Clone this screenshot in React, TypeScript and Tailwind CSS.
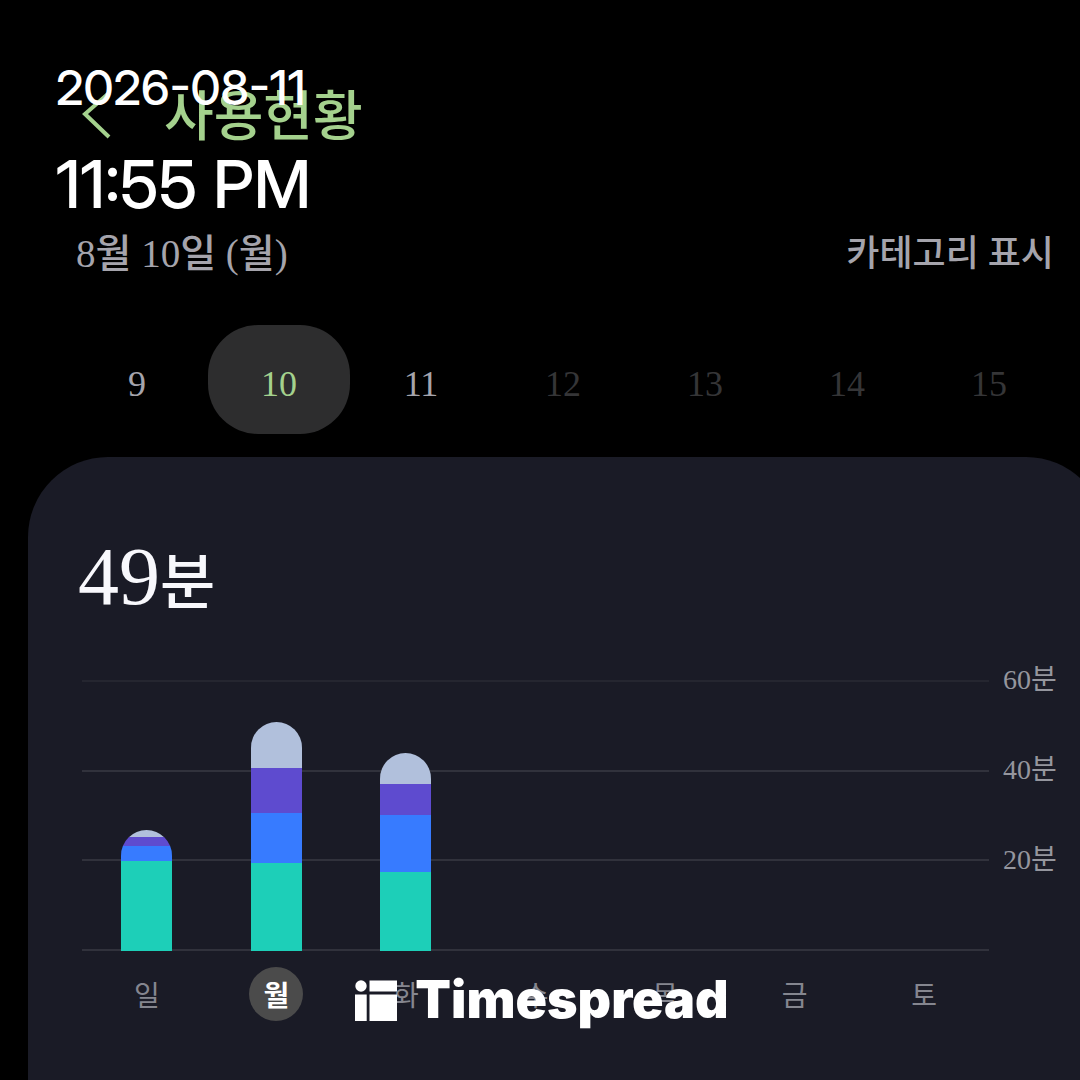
import clsx from "clsx";

const DATES = [
  { day: 9, state: "past" },
  { day: 10, state: "selected" },
  { day: 11, state: "past" },
  { day: 12, state: "future" },
  { day: 13, state: "future" },
  { day: 14, state: "future" },
  { day: 15, state: "future" },
];

const SEGMENT_COLORS = [
  "bg-[#b1c0dc]",
  "bg-[#5e4bcf]",
  "bg-[#377bff]",
  "bg-[#1dcfb8]",
];

// segment heights from top to bottom, 90px = 20 minutes
const WEEK = [
  { label: "일", segments: [7, 9, 15, 90] },
  { label: "월", segments: [46, 45, 50, 88], selected: true },
  { label: "화", segments: [31, 31, 57, 79] },
  { label: "수", segments: [] },
  { label: "목", segments: [] },
  { label: "금", segments: [] },
  { label: "토", segments: [] },
];

export default function App() {
  return (
    <div className="relative flex min-h-screen flex-col overflow-hidden bg-black font-['Liberation_Serif','Noto_Sans_CJK_KR',serif] text-[#a5a4ac]">
      <Header />
      <main className="flex grow flex-col">
        <div className="mt-19 flex items-center justify-between pr-6.5 pl-19 leading-10 font-medium">
          <p className="text-[39px]">8월 10일 (월)</p>
          <button type="button" className="text-[36px]">
            카테고리 표시
          </button>
        </div>
        <DateStrip />
        <UsageCard />
      </main>
      <DateStamp />
      <Brand />
    </div>
  );
}

const Header = () => (
  <header className="flex items-center gap-13 pt-[78px] pl-20 text-[#a4d18d]">
    <button type="button" aria-label="뒤로">
      <svg width="32" height="52" viewBox="0 0 32 52" fill="none">
        <path d="M29 1 5 22l24 23" stroke="currentColor" strokeWidth="4" />
      </svg>
    </button>
    <h1 className="text-[54px] leading-20 font-medium">사용현황</h1>
  </header>
);

const DateStrip = () => (
  <nav className="mt-[51px] flex pr-5 pl-[66px]">
    {DATES.map(({ day, state }) => (
      <button
        key={day}
        type="button"
        className={clsx(
          "flex-1 rounded-[50px] pt-[39px] pb-[30px] text-[36px] leading-10",
          state === "selected" && "bg-[#2d2d2e] text-[#a4d18d]",
          state === "future" && "text-[#353537]",
        )}
      >
        {day}
      </button>
    ))}
  </nav>
);

const UsageCard = () => (
  <section className="mt-[23px] -mr-[26px] ml-7 grow rounded-t-[80px] bg-[#1a1b26] pt-18 pr-12 pb-12 pl-[50px]">
    <h2 className="text-[82px] leading-24 font-medium text-[#f8f8fc]">
      49<span className="text-[60px]">분</span>
    </h2>
    <UsageChart />
  </section>
);

const UsageChart = () => (
  <div className="mt-12 flex gap-3.5 pl-1 text-[28px]">
    <div className="flex-1">
      <div className="grid h-[271px]">
        <div className="col-start-1 row-start-1 flex flex-col justify-between">
          <hr className="border-t-2 border-[#252630]" />
          <hr className="border-t-2 border-[#31323c]" />
          <hr className="border-t-2 border-[#31323c]" />
          <hr className="border-t-2 border-[#31323c]" />
        </div>
        <div className="col-start-1 row-start-1 flex items-end">
          {WEEK.map(({ label, segments }) => (
            <div key={label} className="flex flex-1 justify-center">
              <div className="w-[51px] overflow-hidden rounded-t-full">
                {segments.map((height, i) => (
                  <div
                    key={i}
                    className={SEGMENT_COLORS[i]}
                    style={{ height }}
                  />
                ))}
              </div>
            </div>
          ))}
        </div>
      </div>
      <div className="mt-4 flex text-[#85868f]">
        {WEEK.map(({ label, selected }) => (
          <div key={label} className="flex flex-1 justify-center">
            <button
              type="button"
              className={clsx(
                "size-[54px] rounded-full pt-1.5",
                selected && "bg-[#4b4b4b] font-bold text-white",
              )}
            >
              {label}
            </button>
          </div>
        ))}
      </div>
    </div>
    <div className="-mt-5 flex w-[55px] flex-col gap-[50px] leading-10 whitespace-nowrap text-[#95969e]">
      <span>60분</span>
      <span>40분</span>
      <span>20분</span>
    </div>
  </div>
);

const DateStamp = () => (
  <div className="absolute top-14 left-14 font-['Inter_Display','Inter',sans-serif] font-medium text-white">
    <p className="text-[48px] leading-16">2026-08-11</p>
    <p className="mt-6 text-[66px] leading-20">11:55 PM</p>
  </div>
);

const Brand = () => (
  <div className="absolute inset-x-0 bottom-12 flex items-center justify-center gap-4 pl-1 text-white">
    <svg width="44" height="42" viewBox="0 0 44 42" fill="currentColor">
      <circle cx="6" cy="7" r="5.7" />
      <path d="M14.5 1.500H42v11H14.5zM0 15.500h11.700V42H0zM14.500 15.500H42V42H14.500z" />
    </svg>
    <span className="font-['Inter',sans-serif] text-[52px] leading-16 font-black">
      Timespread
    </span>
  </div>
);
